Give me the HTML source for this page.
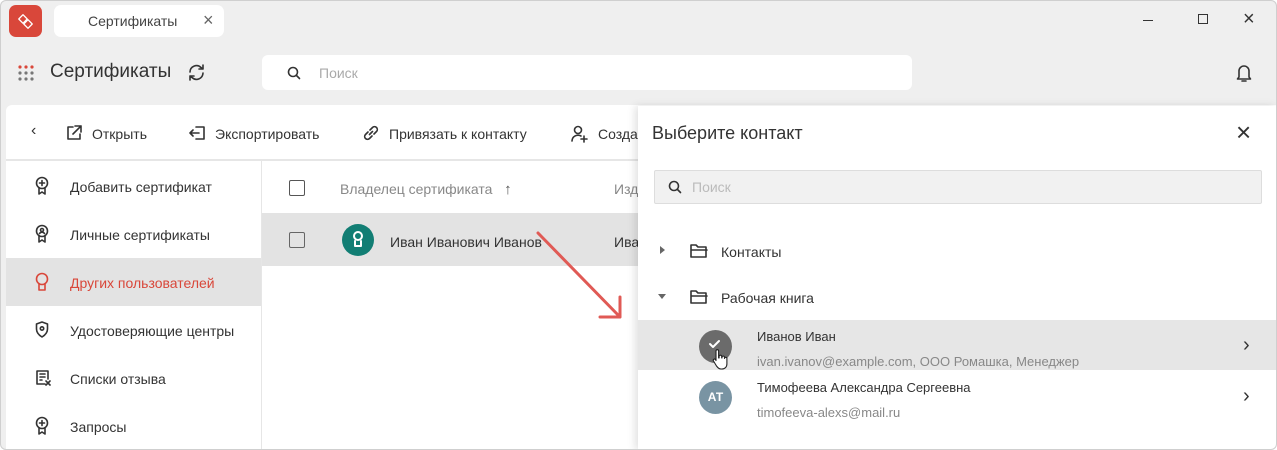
<!DOCTYPE html>
<html><head><meta charset="utf-8"><style>
*{box-sizing:border-box;margin:0;padding:0}
body{width:1277px;height:450px;overflow:hidden;background:#fff;font-family:"Liberation Sans","Noto Sans CJK SC",sans-serif;color:#333;position:relative}
.win{position:absolute;left:0;top:0;width:1277px;height:450px;background:#efefef;border-radius:6px;overflow:hidden}
.frame{position:absolute;left:0;top:0;width:1277px;height:450px;border-radius:6px;box-shadow:inset 0 0 0 1px #cfcfcf;pointer-events:none}
.abs{position:absolute}
.t{font-size:14px;color:#333;white-space:nowrap}
svg{position:absolute;fill:none;stroke:#333;stroke-width:1.6;stroke-linecap:round;stroke-linejoin:round}
</style></head><body><div class="win">
<div class="abs" style="left:9px;top:5px;width:33px;height:32px;background:#d9473a;border-radius:7px"></div>
<svg style="left:15px;top:11px" width="21" height="21" viewBox="0 0 21 21"><g stroke="#fff" stroke-width="1.3"><rect x="5" y="5" width="6" height="6" transform="rotate(45 8 8)"/><rect x="10" y="10" width="6" height="6" transform="rotate(45 13 13)"/></g></svg>
<div class="abs" style="left:54px;top:5px;width:170px;height:32px;background:#fff;border-radius:7px"></div>
<div class="abs t" style="left:88px;top:13px;color:#444">Сертификаты</div>
<div class="abs t" style="left:203px;top:10px;font-size:18px;color:#666;font-weight:300">×</div>
<div class="abs" style="left:1143px;top:20px;width:10px;border-top:1.5px solid #333"></div>
<div class="abs" style="left:1198px;top:14px;width:10px;height:10px;border:1.5px solid #333"></div>
<div class="abs t" style="left:1243px;top:8px;font-size:20px;font-weight:300">×</div>
<svg style="left:17px;top:64px" width="18" height="18" viewBox="0 0 18 18"><g fill="#d9473a" stroke="none"><circle cx="3" cy="3" r="1.6"/><circle cx="9" cy="3" r="1.6"/><circle cx="15" cy="3" r="1.6"/></g><g fill="#777" stroke="none"><circle cx="3" cy="9" r="1.6"/><circle cx="9" cy="9" r="1.6"/><circle cx="15" cy="9" r="1.6"/><circle cx="3" cy="15" r="1.6"/><circle cx="9" cy="15" r="1.6"/><circle cx="15" cy="15" r="1.6"/></g></svg>
<div class="abs t" style="left:50px;top:61px;font-size:19px">Сертификаты</div>
<svg style="left:187px;top:63px" width="19" height="19" viewBox="0 0 19 19" stroke-width="2"><path d="M3 9a6.5 6.5 0 0 1 11-4.5L16 6M16 2v4h-4M16 10a6.5 6.5 0 0 1-11 4.5L3 13M3 17v-4h4"/></svg>
<div class="abs" style="left:262px;top:55px;width:650px;height:35px;background:#fff;border-radius:6px"></div>
<svg style="left:287px;top:66px" width="14" height="14" viewBox="0 0 14 14"><circle cx="6" cy="6" r="4.5"/><path d="M9.5 9.5l3 3"/></svg>
<div class="abs t" style="left:319px;top:65px;color:#aaa">Поиск</div>
<svg style="left:1235px;top:63px" width="18" height="20" viewBox="0 0 18 20"><path d="M4 14V8a5 5 0 0 1 10 0v6l1.5 2h-13zM7 18h4"/></svg>
<div class="abs" style="left:6px;top:105px;width:1270px;height:345px;background:#fff;border-radius:6px 0 0 0"></div>
<div class="abs" style="left:6px;top:159px;width:632px;border-top:2px solid #e6e6e6"></div>
<div class="abs t" style="left:31px;top:122px;font-size:16px">‹</div>
<svg style="left:66px;top:125px" width="16" height="16" viewBox="0 0 16 16"><path d="M7 2H2v12h12V9M9 1h6v6M15 1L7 9"/></svg>
<div class="abs t" style="left:92px;top:126px">Открыть</div>
<svg style="left:189px;top:124px" width="18" height="18" viewBox="0 0 18 18"><path d="M7 3h8v12H7M1 9h9M4 6L1 9l3 3"/></svg>
<div class="abs t" style="left:215px;top:126px">Экспортировать</div>
<svg style="left:362px;top:124px" width="18" height="18" viewBox="0 0 18 18"><path d="M7.5 10.5l3-3M6 8l-2.5 2.5a2.8 2.8 0 0 0 4 4L10 12M12 10l2.5-2.5a2.8 2.8 0 0 0-4-4L8 6"/></svg>
<div class="abs t" style="left:389px;top:126px">Привязать к контакту</div>
<svg style="left:570px;top:124px" width="20" height="20" viewBox="0 0 20 20"><circle cx="8" cy="6" r="3.5"/><path d="M2 17a6 6 0 0 1 9-5M14 12v6M11 15h6"/></svg>
<div class="abs t" style="left:598px;top:126px">Созда</div>
<div class="abs" style="left:261px;top:161px;height:289px;border-left:1px solid #e6e6e6"></div>
<div class="abs" style="left:6px;top:258px;width:255px;height:48px;background:#e3e3e3"></div>
<svg style="left:35px;top:176px" width="14" height="20" viewBox="0 0 14 20"><circle cx="7" cy="7" r="5.5"/><path d="M7 4.5v5M4.5 7h5M4 12v6l3-2 3 2v-6"/></svg>
<div class="abs t" style="left:70px;top:179px">Добавить сертификат</div>
<svg style="left:35px;top:224px" width="14" height="20" viewBox="0 0 14 20"><circle cx="7" cy="7" r="5.5"/><circle cx="7" cy="6" r="1.5"/><path d="M4.5 9.5a3 3 0 0 1 5 0M4 12v6l3-2 3 2v-6"/></svg>
<div class="abs t" style="left:70px;top:227px">Личные сертификаты</div>
<svg style="left:35px;top:272px;stroke:#d9473a" width="14" height="20" viewBox="0 0 14 20"><circle cx="7" cy="7" r="5.5"/><path d="M4 12v6h6v-6"/></svg>
<div class="abs t" style="left:70px;top:275px;color:#d9473a">Других пользователей</div>
<svg style="left:35px;top:320px" width="14" height="20" viewBox="0 0 14 20"><path d="M7 2l5.5 2v5c0 4-3 6.5-5.5 8C4.5 15.5 1.5 13 1.5 9V4z"/><circle cx="7" cy="8.5" r="1.7"/></svg>
<div class="abs t" style="left:70px;top:323px">Удостоверяющие центры</div>
<svg style="left:35px;top:369px" width="16" height="18" viewBox="0 0 16 18"><path d="M10 15H2V2h11v8M5 5h5M5 8h5M5 11h2M11 12l4 4M15 12l-4 4"/></svg>
<div class="abs t" style="left:70px;top:371px">Списки отзыва</div>
<svg style="left:35px;top:416px" width="14" height="20" viewBox="0 0 14 20"><circle cx="7" cy="7" r="5.5"/><path d="M7 4.5v5M4.5 7h5M4 12v6l3-2 3 2v-6"/></svg>
<div class="abs t" style="left:70px;top:419px">Запросы</div>
<div class="abs" style="left:289px;top:180px;width:16px;height:16px;border:1.5px solid #555;border-radius:2px"></div>
<div class="abs t" style="left:340px;top:181px;color:#888">Владелец сертификата&nbsp;&nbsp;&nbsp;<span style="color:#555;font-size:15px">↑</span></div>
<div class="abs t" style="left:614px;top:181px;color:#888">Изд</div>
<div class="abs" style="left:262px;top:213px;width:376px;height:53px;background:#e3e3e3"></div>
<div class="abs" style="left:289px;top:232px;width:16px;height:16px;border:1.5px solid #666;border-radius:2px"></div>
<div class="abs" style="left:342px;top:224px;width:32px;height:32px;border-radius:50%;background:#127e74"></div>
<svg style="left:350px;top:229px;stroke:#fff;stroke-width:2" width="16" height="22" viewBox="0 0 16 22"><circle cx="8" cy="7" r="4"/><path d="M5 12v5h6v-5"/></svg>
<div class="abs t" style="left:390px;top:234px">Иван Иванович Иванов</div>
<div class="abs t" style="left:614px;top:234px">Ива</div>
<svg style="left:530px;top:225px;stroke:#e05a55;stroke-width:3" width="100" height="100" viewBox="0 0 100 100"><path d="M8 8L90 92M70 92h20V72"/></svg>
<div class="abs" style="left:638px;top:106px;width:639px;height:344px;background:#fff;box-shadow:-3px 0 8px rgba(0,0,0,.12)"></div>
<div class="abs t" style="left:652px;top:123px;font-size:18px">Выберите контакт</div>
<div class="abs t" style="left:1236px;top:117px;font-size:26px;font-weight:300">×</div>
<div class="abs" style="left:654px;top:170px;width:608px;height:34px;background:#f1f1f1;border:1px solid #ddd;border-radius:2px"></div>
<svg style="left:668px;top:180px" width="14" height="14" viewBox="0 0 14 14" stroke="#777"><circle cx="6" cy="6" r="4.5"/><path d="M9.5 9.5l3 3"/></svg>
<div class="abs t" style="left:692px;top:179px;color:#bbb">Поиск</div>
<div class="abs" style="left:660px;top:246px;border-left:5px solid #666;border-top:4px solid transparent;border-bottom:4px solid transparent"></div>
<svg style="left:690px;top:243px" width="18" height="16" viewBox="0 0 18 16" stroke="#555" stroke-width="1.3"><path d="M1 2h5l2 2h8v10H1zM1 7h16"/></svg>
<div class="abs t" style="left:721px;top:244px">Контакты</div>
<div class="abs" style="left:658px;top:294px;border-top:5px solid #666;border-left:4px solid transparent;border-right:4px solid transparent"></div>
<svg style="left:690px;top:289px" width="18" height="16" viewBox="0 0 18 16" stroke="#555" stroke-width="1.3"><path d="M1 2h5l2 2h8v10H1zM1 7h16"/></svg>
<div class="abs t" style="left:721px;top:290px">Рабочая книга</div>
<div class="abs" style="left:638px;top:320px;width:639px;height:50px;background:#e6e6e6"></div>
<div class="abs" style="left:699px;top:330px;width:33px;height:33px;border-radius:50%;background:#6b6b6b"></div>
<svg style="left:708px;top:338px;stroke:#fff;stroke-width:2" width="14" height="12" viewBox="0 0 14 12"><path d="M2 6l3 3 6-6"/></svg>
<svg style="left:712px;top:349px;fill:#fff;stroke:#222;stroke-width:1.1" width="16" height="22" viewBox="0 0 16 22"><path d="M4 2a1.3 1.3 0 0 1 2.6 0v7h.5V7.5a1.3 1.3 0 0 1 2.6 0V9h.3V8a1.3 1.3 0 0 1 2.5 0v1.5a1.2 1.2 0 0 1 2.4 0V15c0 3-2 5-5 5H9c-2 0-3-1-4.5-3L1.5 12a1.2 1.2 0 0 1 2-1.4L4 11.5z"/></svg>
<div class="abs t" style="left:757px;top:329px;font-size:13px">Иванов Иван</div>
<div class="abs t" style="left:757px;top:354px;font-size:13px;color:#888">ivan.ivanov@example.com, ООО Ромашка, Менеджер</div>
<div class="abs t" style="left:1243px;top:334px;font-size:20px;font-weight:300">›</div>
<div class="abs" style="left:699px;top:381px;width:33px;height:33px;border-radius:50%;background:#7994a3;color:#fff;font-size:12px;font-weight:bold;text-align:center;line-height:33px">АТ</div>
<div class="abs t" style="left:757px;top:380px;font-size:13px">Тимофеева Александра Сергеевна</div>
<div class="abs t" style="left:757px;top:405px;font-size:13px;color:#888">timofeeva-alexs@mail.ru</div>
<div class="abs t" style="left:1243px;top:385px;font-size:20px;font-weight:300">›</div>
</div><div class="frame"></div></body></html>
